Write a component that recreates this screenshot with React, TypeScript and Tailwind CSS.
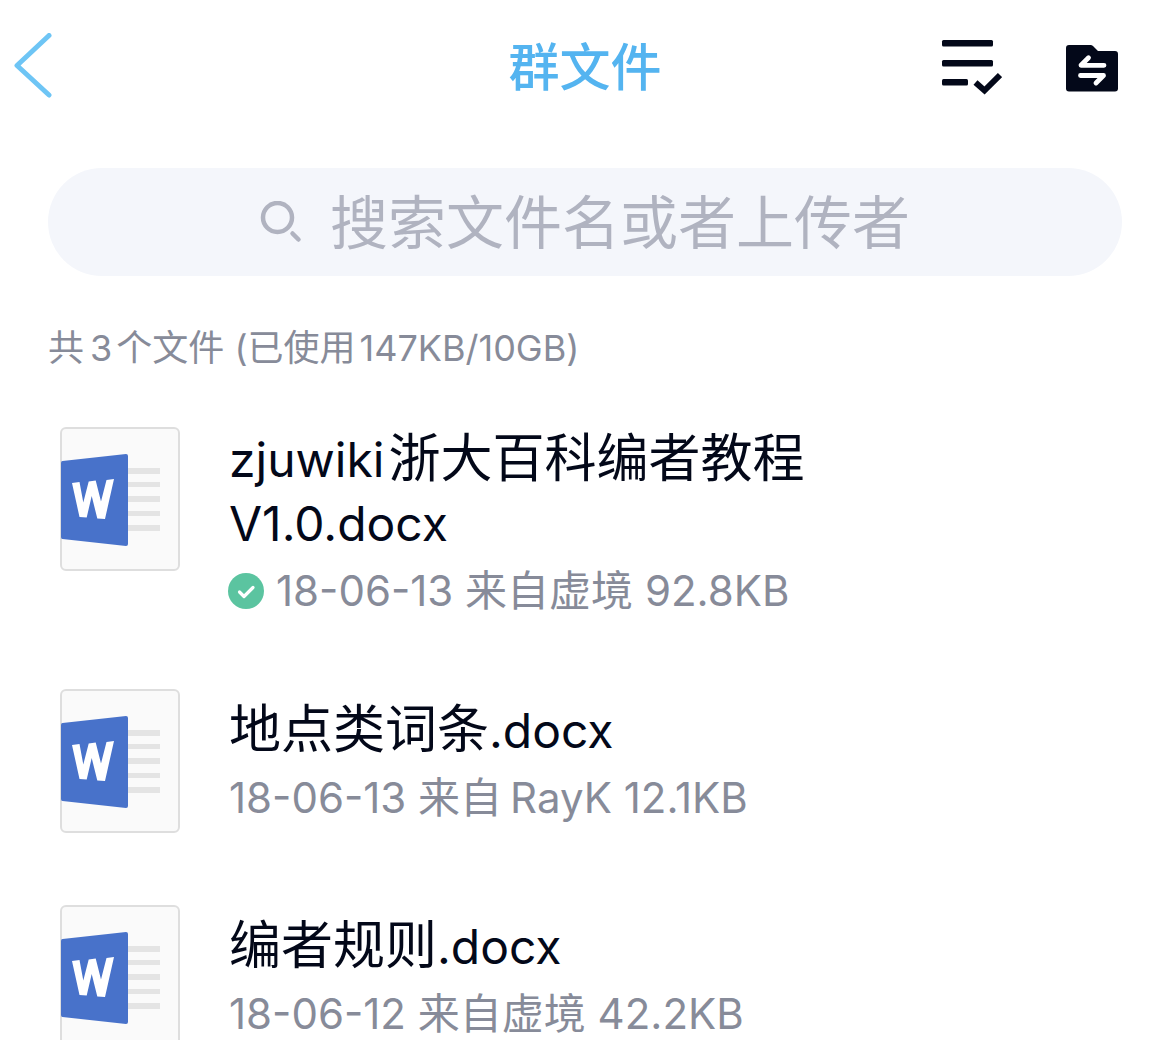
type FileEntry = { name: string; date: string; from: string; size: string; done?: boolean };

const files: FileEntry[] = [
  { name: 'zjuwiki浙大百科编者教程V1.0.docx', date: '18-06-13', from: '虚境', size: '92.8KB', done: true },
  { name: '地点类词条.docx', date: '18-06-13', from: 'RayK', size: '12.1KB' },
  { name: '编者规则.docx', date: '18-06-12', from: '虚境', size: '42.2KB' },
];

const LATIN = /^[\x20-\x7e]+$/;

/* File names set Latin runs slightly smaller than the Chinese around them. */
function FileName({ name }: { name: string }) {
  const runs = name.match(/[\x20-\x7e]+|[^\x20-\x7e]+/g) ?? [];
  return (
    <>
      {runs.map((run, i) =>
        LATIN.test(run) ? (
          <span key={i} className={i === 0 ? 'mr-1 text-[48px] leading-none' : 'text-[48px] leading-none'}>
            {run}
          </span>
        ) : (
          <span key={i}>{run}</span>
        ),
      )}
    </>
  );
}

function WordIcon() {
  return (
    <svg className="h-36 w-[120px] shrink-0" viewBox="0 0 120 144" aria-hidden="true">
      <rect x="1" y="1" width="118" height="142" rx="5" fill="#fafafa" stroke="#dedede" strokeWidth="2" />
      <path d="M68 41h32v6H68zM68 55h32v5H68zM68 69h32v6H68zM68 84h32v5H68zM68 98h32v6H68z" fill="#e4e4e4" />
      <path d="M2.500 34 66 27q2 0 2 2v88q0 2-2 2L2.500 112q-1.500 0-1.500-2V36q0-2 1.500-2Z" fill="#4872ca" />
      <path
        d="M12 56 19.500 55 23.300 75.500 28.700 54.500 35.700 53.500 41 74.500 46.500 53 54 52 45 92 37.300 91.500 31.700 69 26.700 90.500 19.500 90Z"
        fill="#fff"
      />
    </svg>
  );
}

function FileRow({ file }: { file: FileEntry }) {
  return (
    <li>
      <a href="#file" className="flex gap-[49px] py-9 pr-12 pl-[60px]">
        <WordIcon />
        <div className="max-w-[600px] min-w-0 self-center">
          <h2 className="text-[52px] leading-[64px] break-words text-[#030819]">
            <FileName name={file.name} />
          </h2>
          <p className="mt-[10px] flex items-center text-[42px] leading-[52px] text-[#878b99]">
            {file.done && (
              <svg className="mr-3 -ml-px size-9 shrink-0" viewBox="0 0 36 36" role="img" aria-label="已下载">
                <circle cx="18" cy="18" r="18" fill="#5bc4a0" />
                <path d="m11.500 19 4.500 4.500 9-9" fill="none" stroke="#fff" strokeWidth="3.200" strokeLinecap="round" strokeLinejoin="round" />
              </svg>
            )}
            <span>
              {file.date} 来自
              <span className={LATIN.test(file.from) ? 'ml-2' : ''}>{file.from}</span> {file.size}
            </span>
          </p>
        </div>
      </a>
    </li>
  );
}

export default function App() {
  return (
    <div className="h-screen overflow-hidden bg-white font-['Inter','Noto_Sans_CJK_SC',sans-serif]">
      <header className="grid h-[134px] grid-cols-[1fr_auto_1fr] items-center">
        <button type="button" aria-label="返回" className="ml-3 w-fit">
          <svg className="h-[68px] w-10" viewBox="0 0 40 68" fill="none" stroke="#6ec5f5" strokeWidth="5" strokeLinecap="round" strokeLinejoin="round">
            <path d="M37 2.500 5 32.500 37 62" />
          </svg>
        </button>
        <h1 className="pt-0.5 text-[51px] leading-[64px] font-medium text-[#54b4f0]">群文件</h1>
        <div className="flex items-center gap-16 justify-self-end pr-[52px]">
          <button type="button" aria-label="选择文件">
            <svg className="h-14 w-[61px]" viewBox="0 0 61 56" fill="#030819">
              <rect x="1" y="1" width="51" height="6.500" rx="1.500" />
              <rect x="1" y="21" width="51" height="6.500" rx="1.500" />
              <rect x="1" y="40" width="26" height="6.500" rx="1.500" />
              <path d="m34.500 43.500 9 8L59 36" fill="none" stroke="#030819" strokeWidth="6" />
            </svg>
          </button>
          <button type="button" aria-label="传输列表">
            <svg className="h-14 w-[52px]" viewBox="0 0 52 56">
              <path d="M3 6h21.500q1.500 0 2.500 1l5 5h17q3 0 3 3v34.500q0 3-3 3H3q-3 0-3-3V9q0-3 3-3Z" fill="#030819" />
              <path d="M38 26.300H15L22.500 18.800M14.500 36.500H37.500L30 44" fill="none" stroke="#fff" strokeWidth="4.800" strokeLinecap="round" strokeLinejoin="round" />
            </svg>
          </button>
        </div>
      </header>

      <label className="mx-12 mt-[34px] flex h-[108px] items-center justify-center gap-7 rounded-full bg-[#f4f6fb]">
        <svg className="size-[42px] shrink-0" viewBox="0 0 42 42" fill="none" stroke="#b0b3c0" strokeWidth="4.500" strokeLinecap="round">
          <circle cx="17.500" cy="16.500" r="14.500" />
          <path d="m32.500 32.500 6 6" />
        </svg>
        <input
          type="search"
          aria-label="搜索文件"
          placeholder="搜索文件名或者上传者"
          className="field-sizing-content min-w-0 bg-transparent pb-1.5 text-[58px] leading-[84px] text-[#030819] outline-none placeholder:text-[#b0b3c0]"
        />
      </label>

      <p className="mx-12 mt-12 text-[36px] leading-[48px] text-[#878b99]">
        共<span className="mr-1 ml-1.5">3</span>个文件 (已使用<span className="ml-1">147KB/10GB)</span>
      </p>

      <ul className="mt-[19px]">
        {files.map((file) => (
          <FileRow key={file.name} file={file} />
        ))}
      </ul>
    </div>
  );
}
